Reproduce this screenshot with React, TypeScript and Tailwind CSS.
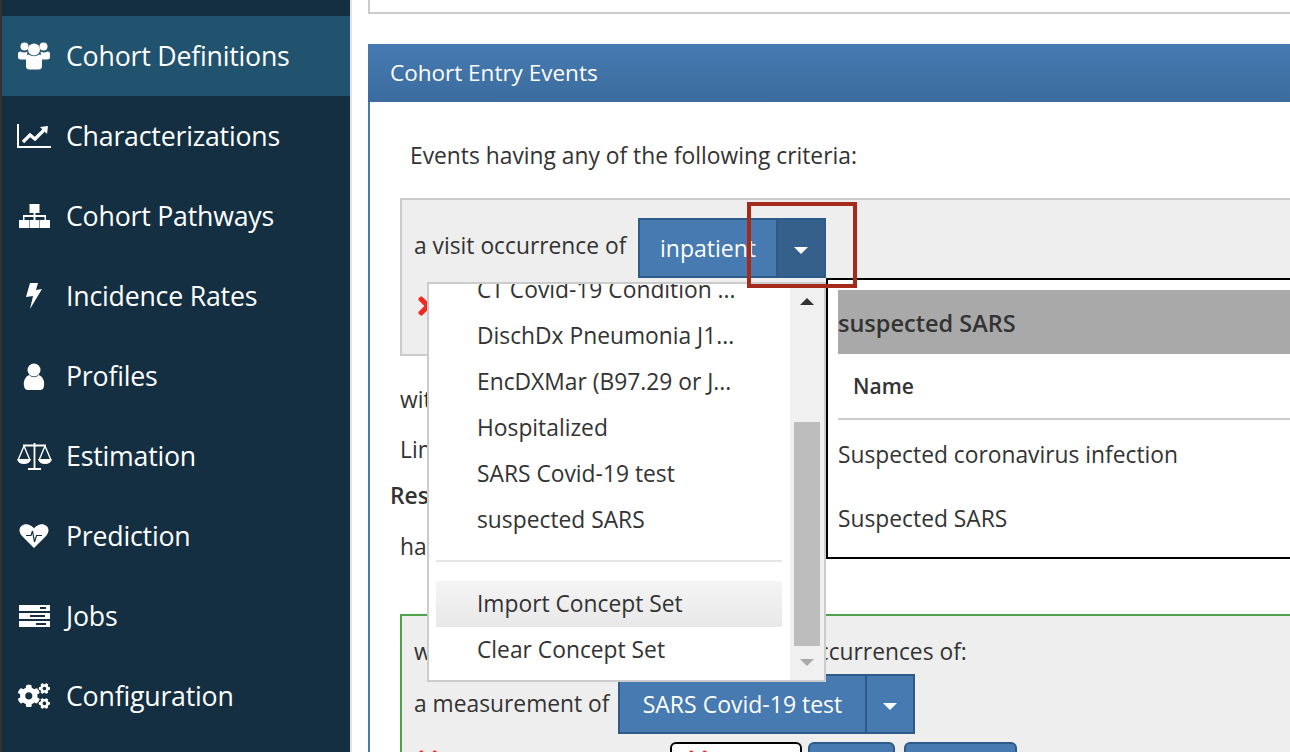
import { ReactNode } from "react";
import { FaCogs, FaTimes } from "react-icons/fa";

const font = "font-['Open_Sans','Noto_Sans',sans-serif]";

// font awesome 4 look, the newer sets in react-icons draw these differently
const UsersIcon = () => (
  <svg width="32" height="28" viewBox="0 0 32 28" fill="white">
    <circle cx="6.5" cy="4.5" r="4" />
    <circle cx="25.5" cy="4.5" r="4" />
    <circle cx="16" cy="7.5" r="6" />
    <path d="M0 11.5 Q0 9.5 2.5 9.5 Q6.5 11.5 9.5 9.5 Q8.5 13 9 17.5 H3 Q0 17.5 0 15 Z" />
    <path d="M32 11.5 Q32 9.5 29.5 9.5 Q25.5 11.5 22.5 9.5 Q23.5 13 23 17.5 H29 Q32 17.5 32 15 Z" />
    <path d="M8 15 Q8 12.5 10.5 12.5 Q16 16 21.5 12.5 Q24 12.5 24 15 V24 Q24 27.5 20.5 27.5 H11.5 Q8 27.5 8 24 Z" />
  </svg>
);

const ChartIcon = () => (
  <svg width="34" height="24" viewBox="0 0 34 24" fill="none" stroke="white">
    <path d="M1 0 V23 H34" strokeWidth="2" />
    <path d="M6 18 L13 11 L18 15 L27 6" strokeWidth="3.2" />
    <path d="M23 3 L31 2 L30 10 Z" fill="white" stroke="none" />
  </svg>
);

const SitemapIcon = () => (
  <svg width="31" height="24" viewBox="0 0 31 24" fill="white">
    <rect x="10.5" y="0" width="10" height="9" />
    <rect x="0" y="16" width="10" height="8" />
    <rect x="10.5" y="16" width="10" height="8" />
    <rect x="21" y="16" width="10" height="8" />
    <path d="M14.5 9 H16.5 V11 H27 V16 H25.5 V13 H16.5 V16 H14.5 V13 H5.5 V16 H4 V11 H14.5 Z" />
  </svg>
);

const BoltIcon = () => (
  <svg width="16" height="26" viewBox="0 0 16 26" fill="white">
    <path d="M4 0 L12 0 L10 7 L16 6 L4 26 L7 13 L0 14 Z" />
  </svg>
);

const UserIcon = () => (
  <svg width="22" height="27" viewBox="0 0 22 27" fill="white">
    <circle cx="11" cy="7" r="6.5" />
    <path d="M1 23 C0 17 3 13 6.5 12 C9 15 13 15 15.5 12 C19 13 22 17 21 23 Q20.5 27 17 27 H5 Q1.5 27 1 23 Z" />
  </svg>
);

const ScaleIcon = () => (
  <svg width="35" height="28" viewBox="0 0 35 28" fill="none" stroke="white" strokeWidth="1.4">
    <path d="M17.5 1 V27 M11 27 H24 M6 3.5 H29" strokeWidth="1.8" />
    <path d="M7 4 L1.5 17 M7 4 L12.5 17 M28 4 L22.5 17 M28 4 L33.5 17" />
    <path d="M0 17 H14 Q13 22 7 22 Q1 22 0 17 Z M21 17 H35 Q34 22 28 22 Q22 22 21 17 Z" fill="white" stroke="none" />
  </svg>
);

const HeartIcon = () => (
  <svg width="30" height="24" viewBox="0 0 30 24">
    <path d="M15 24 L3 12 C-3 5 3 -1 9 0.5 C12 1 14 3 15 4.5 C16 3 18 1 21 0.5 C27 -1 33 5 27 12 Z" fill="white" />
    <path d="M7 11.5 H12 L13.5 7 L15.5 18 L17.5 11.5 H23" fill="none" stroke="#132f41" strokeWidth="1.2" />
  </svg>
);

const TasksIcon = () => (
  <svg width="31" height="22" viewBox="0 0 31 22" fill="white">
    <rect y="0" width="31" height="6" />
    <rect y="8" width="31" height="6" />
    <rect y="16" width="31" height="6" />
    <rect x="21" y="2" width="6" height="2" fill="#132f41" />
    <rect x="11" y="10" width="15" height="2" fill="#132f41" />
    <rect x="17" y="18" width="10" height="2" fill="#132f41" />
  </svg>
);

const navItems = [
  { label: "Cohort Definitions", icon: <UsersIcon />, active: true },
  { label: "Characterizations", icon: <ChartIcon /> },
  { label: "Cohort Pathways", icon: <SitemapIcon /> },
  { label: "Incidence Rates", icon: <BoltIcon /> },
  { label: "Profiles", icon: <UserIcon /> },
  { label: "Estimation", icon: <ScaleIcon /> },
  { label: "Prediction", icon: <HeartIcon /> },
  { label: "Jobs", icon: <TasksIcon /> },
  { label: "Configuration", icon: <FaCogs size={32} /> },
];

function Sidebar() {
  return (
    <aside className="w-[352px] h-[752px] shrink-0 bg-[#132f41] border-l-2 border-l-[#333] border-r-2 border-r-[#e3e3e3] pt-4 overflow-hidden">
      {navItems.map((item) => (
        <div
          key={item.label}
          className={`h-20 flex items-center text-white ${item.active ? "bg-[#22536e]" : ""}`}
        >
          <span className="w-[64px] flex justify-center shrink-0">{item.icon}</span>
          <span className="text-[26.7px] tracking-[-0.2px]">{item.label}</span>
        </div>
      ))}
    </aside>
  );
}

function SplitButton({ label, wide, dark }: { label: string; wide: string; dark?: boolean }) {
  return (
    <div className="inline-flex h-[60px] border-2 border-[#2e5a88] bg-[#467ab1] text-white text-[23px]">
      <span className={`${wide} flex items-center justify-center`}>{label}</span>
      <span className={`w-[48px] flex items-center justify-center border-l-2 border-[#2e5a88] ${dark ? "bg-[#34608b]" : ""}`}>
        <span className="w-0 h-0 mt-1 border-x-[7px] border-x-transparent border-t-[7px] border-t-white" />
      </span>
    </div>
  );
}

function MenuItem({ children, hover }: { children: ReactNode; hover?: boolean }) {
  return (
    <div
      className={`h-[46px] pl-[41px] flex items-center text-[22.8px] text-[#333] ${
        hover ? "bg-gradient-to-b from-[#f5f5f5] to-[#e8e8e8]" : ""
      }`}
    >
      {children}
    </div>
  );
}

function ConceptMenu() {
  return (
    <div className="absolute left-[27px] top-[84px] w-[399px] h-[400px] bg-white border-2 border-[#ccc] flex overflow-hidden z-10">
      <div className="flex-1 pl-[7px] pr-[8px] -mt-[17px]">
        <MenuItem>CT Covid-19 Condition ...</MenuItem>
        <MenuItem>DischDx Pneumonia J1...</MenuItem>
        <MenuItem>EncDXMar (B97.29 or J...</MenuItem>
        <MenuItem>Hospitalized</MenuItem>
        <MenuItem>SARS Covid-19 test</MenuItem>
        <MenuItem>suspected SARS</MenuItem>
        <div className="mt-[17px] mb-[19px] h-[2px] bg-[#e5e5e5]" />
        <MenuItem hover>Import Concept Set</MenuItem>
        <MenuItem>Clear Concept Set</MenuItem>
      </div>
      <div className="w-[34px] bg-[#f0f0f0] flex flex-col items-center justify-between pt-[14px] pb-[14px] shrink-0">
        <span className="w-0 h-0 border-x-[7px] border-x-transparent border-b-[7px] border-b-[#333]" />
        <span className="w-0 h-0 border-x-[7px] border-x-transparent border-t-[7px] border-t-[#aaa]" />
      </div>
      <div className="absolute right-[4px] top-[138px] w-[26px] h-[224px] bg-[#bdbdbd]" />
    </div>
  );
}

function ConceptPreview() {
  return (
    <div className="absolute left-[426px] top-[80px] w-[480px] h-[281px] bg-white border-2 border-black pl-[10px] pt-[10px] text-[22.8px] text-[#333] z-[5]">
      <div className="h-[64px] pt-1 bg-[#a9a9a9] flex items-center font-semibold text-[23.5px]">suspected SARS</div>
      <div className="h-[66px] pl-[15px] pt-[2px] flex items-center font-semibold text-[21px] border-b-2 border-[#ccc]">Name</div>
      <div className="h-[66px] pt-1 flex items-center">Suspected coronavirus infection</div>
      <div className="h-[62px] pt-1 flex items-center">Suspected SARS</div>
    </div>
  );
}

export default function App() {
  return (
    <div className={`flex w-[1290px] h-[752px] overflow-hidden bg-white text-[#333] ${font}`}>
      <Sidebar />
      <main className="flex-1 min-w-0 pl-4 overflow-hidden">
        <div className="h-[14px] border-l-2 border-b-2 border-[#ccc]" />
        <section className="mt-[30px] w-[1000px] border-l-2 border-[#467ab1] relative">
          <div className="h-[58px] -ml-[2px] pl-[22px] flex items-center text-white text-[22.5px] bg-gradient-to-b from-[#467ab1] to-[#3c6c9e]">
            Cohort Entry Events
          </div>
          <div className="pt-[37px] pl-[30px]">
            <p className="pl-[10px] text-[22.8px] leading-[34px]">Events having any of the following criteria:</p>
            <div className="relative mt-[25px]">
              <div className="h-[158px] bg-[#eee] border-2 border-[#ccc] pl-[12px] pt-[18px]">
                <div className="flex items-start gap-3">
                  <span className="w-[212px] whitespace-nowrap text-[22.8px] leading-[56px]">a visit occurrence of</span>
                  <SplitButton label="inpatient" wide="w-[136px]" dark />
                </div>
                <FaTimes className="mt-[14px] text-[#f02a20]" size={28} />
              </div>
              <ConceptPreview />
              <ConceptMenu />
              <div className="absolute left-[347px] top-[4px] w-[110px] h-[86px] border-[4px] border-[#a52a1b] z-20" />
              <div className="pt-[23px] text-[22.8px]">
                <div className="leading-[42px]">with</div>
                <div className="leading-[58px]">Limit</div>
                <div className="-ml-[10px] leading-[34px] font-semibold">Result</div>
                <div className="leading-[68px]">having</div>
              </div>
              <div className="mt-[33px] h-[200px] bg-[#eee] border-2 border-[#4ea24c] pl-[12px] pt-[16px] text-[22.8px]">
                <div className="flex leading-[40px]">
                  <span className="w-[390px]">with</span>
                  <span>occurrences of:</span>
                </div>
                <div className="flex items-start gap-3 mt-[2px]">
                  <span className="w-[192px] whitespace-nowrap leading-[60px]">a measurement of</span>
                  <SplitButton label="SARS Covid-19 test" wide="w-[245px]" />
                </div>
                <div className="flex mt-[8px]">
                  <FaTimes className="mt-[4px] w-[28px] text-[#f02a20]" size={28} />
                  <div className="ml-[228px] w-[132px] h-[40px] pl-[12px] pt-[2px] bg-white border-2 border-black rounded-t-md">
                    <FaTimes className="text-[#f02a20]" size={28} />
                  </div>
                  <div className="ml-[6px] w-[87px] h-[40px] bg-[#467ab1] border-2 border-[#2e5a88] rounded-t-md" />
                  <div className="ml-[9px] w-[113px] h-[40px] bg-[#467ab1] border-2 border-[#2e5a88] rounded-t-md" />
                </div>
              </div>
            </div>
          </div>
        </section>
      </main>
    </div>
  );
}
